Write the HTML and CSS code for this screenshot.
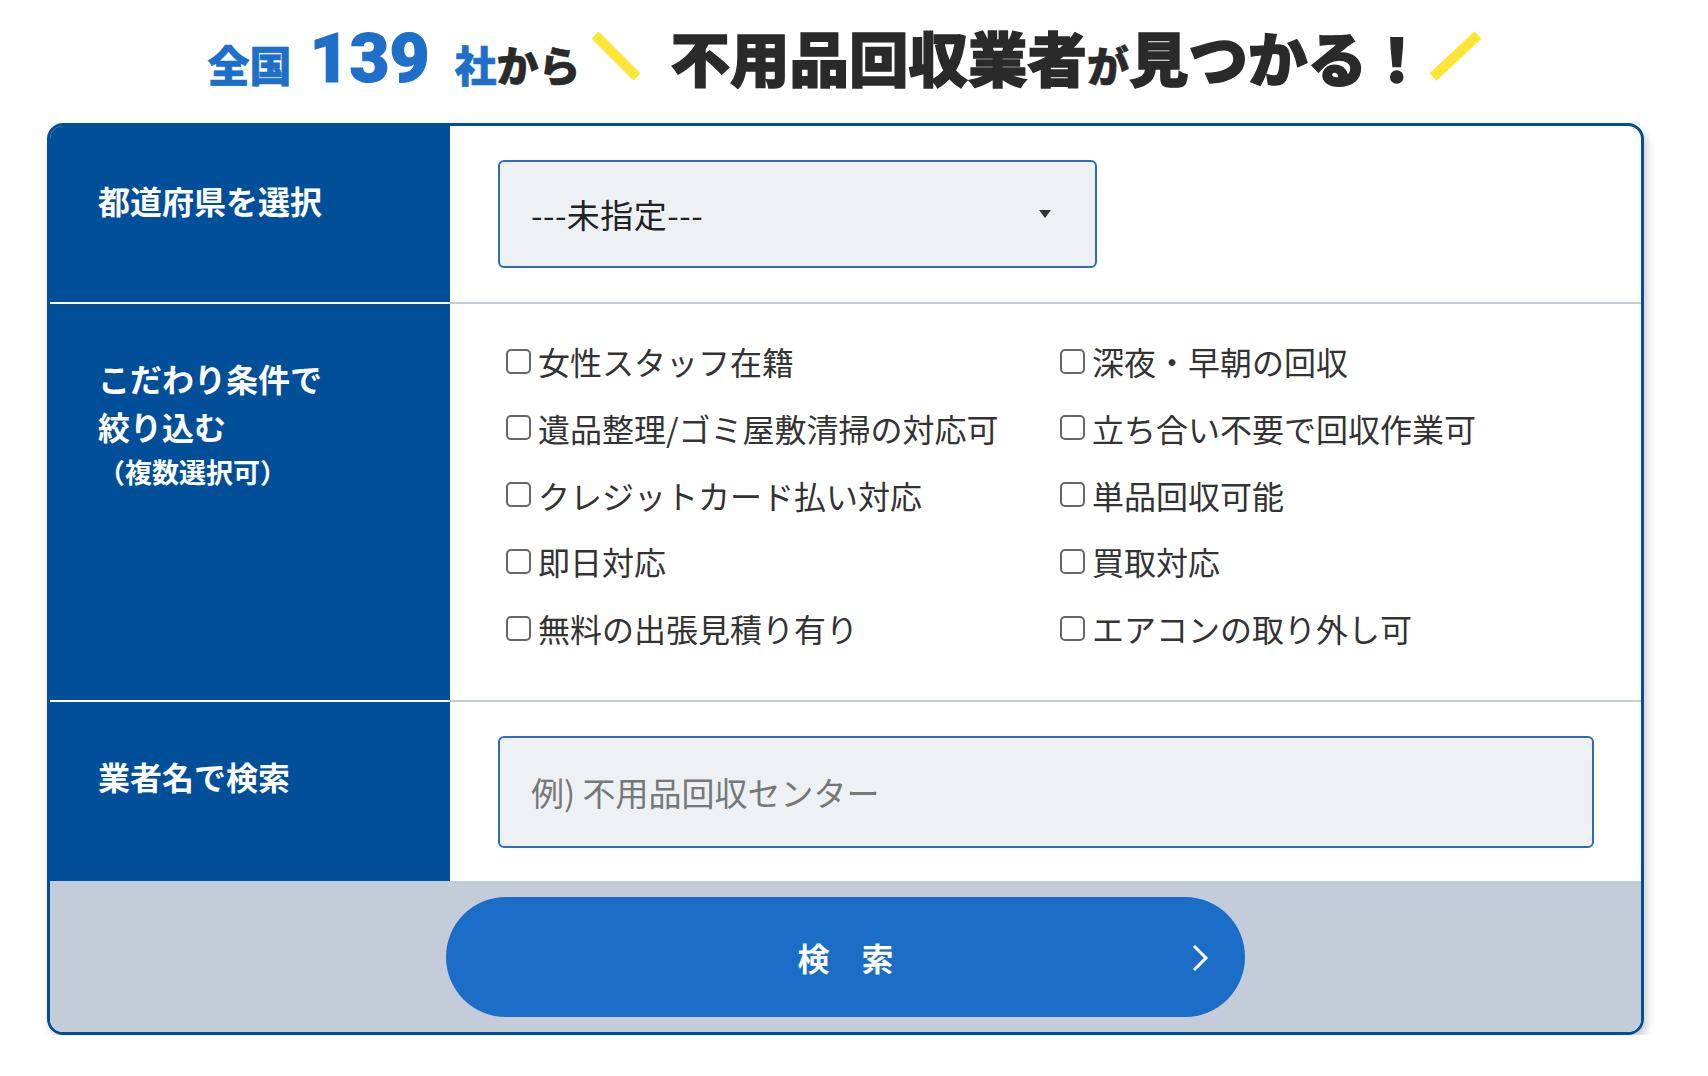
FILE: index.html
```html
<!DOCTYPE html>
<html lang="ja">
<head>
  <meta charset="UTF-8">
  <meta name="viewport" content="width=device-width, initial-scale=1.0">
  <title>不用品回収業者を探す</title>
  <link rel="stylesheet" href="styles.css">
</head>
<body>
  <div class="wrap">
    <h1 class="lead">
      <span class="lead-sm blue">全国</span>
      <span class="lead-num">139</span>
      <span class="lead-sm blue">社</span>
      <span class="lead-sm">から</span>
      <svg class="slash slash-left" width="54" height="52" viewBox="0 0 54 52">
        <line x1="6" y1="5" x2="48" y2="47" stroke="#fde536" stroke-width="10" />
      </svg>
      <span class="lead-lg">不用品回収業者</span>
      <span class="lead-sm">が</span>
      <span class="lead-lg">見つかる！</span>
      <svg class="slash" width="57" height="52" viewBox="0 0 57 52">
        <line x1="6" y1="47" x2="51" y2="5" stroke="#fde536" stroke-width="10" />
      </svg>
    </h1>

    <form class="search" onsubmit="return false;">
      <div class="row">
        <div class="row-label">都道府県を選択</div>
        <div class="row-body">
          <div class="select-box">
            <select class="select">
              <option>---未指定---</option>
              <option>北海道</option>
              <option>東京都</option>
              <option>大阪府</option>
            </select>
            <span class="select-arrow"></span>
          </div>
        </div>
      </div>

      <div class="row">
        <div class="row-label">
          こだわり条件で<br>絞り込む
          <span class="row-note">（複数選択可）</span>
        </div>
        <div class="row-body">
          <div class="checks">
            <label class="check"><input type="checkbox"><span>女性スタッフ在籍</span></label>
            <label class="check"><input type="checkbox"><span>深夜・早朝の回収</span></label>
            <label class="check"><input type="checkbox"><span>遺品整理/ゴミ屋敷清掃の対応可</span></label>
            <label class="check"><input type="checkbox"><span>立ち合い不要で回収作業可</span></label>
            <label class="check"><input type="checkbox"><span>クレジットカード払い対応</span></label>
            <label class="check"><input type="checkbox"><span>単品回収可能</span></label>
            <label class="check"><input type="checkbox"><span>即日対応</span></label>
            <label class="check"><input type="checkbox"><span>買取対応</span></label>
            <label class="check"><input type="checkbox"><span>無料の出張見積り有り</span></label>
            <label class="check"><input type="checkbox"><span>エアコンの取り外し可</span></label>
          </div>
        </div>
      </div>

      <div class="row">
        <div class="row-label">業者名で検索</div>
        <div class="row-body">
          <input type="text" class="text-input" placeholder="例) 不用品回収センター">
        </div>
      </div>

      <div class="search-foot">
        <button type="submit" class="search-btn">
          検　索
          <svg class="search-btn-arrow" width="18" height="28" viewBox="0 0 18 28">
            <polyline points="3,2 15,14 3,26" fill="none" stroke="#fff" stroke-width="3" />
          </svg>
        </button>
      </div>
    </form>
  </div>
</body>
</html>
```

FILE: styles.css
```css
html, body {
  margin: 0;
  padding: 0;
  background-color: #fff;
  color: #333;
  font-family: "Noto Sans CJK JP", "Noto Sans", sans-serif;
}

.wrap {
  width: 1691px;
  padding-top: 16px;
}

/* heading */
.lead {
  display: flex;
  justify-content: center;
  align-items: baseline;
  height: 81px;
  line-height: 81px;
  margin: 0 0 26px;
  color: #2a2a2a;
  font-weight: 900;
  white-space: nowrap;
}

.lead-sm {
  font-size: 42px;
  -webkit-text-stroke: 0.6px currentColor;
}

.blue {
  color: #1e6fc8;
}

.lead-num {
  font-family: Roboto, "Noto Sans", sans-serif;
  font-size: 69px;
  font-weight: 900;
  color: #1e6fc8;
  margin: 0 25px 0 18px;
  -webkit-text-stroke: 1.2px currentColor;
}

.lead-lg {
  font-size: 59.5px;
  -webkit-text-stroke: 1.4px currentColor;
}

.slash {
  margin-bottom: -6px;
}

.slash-left {
  margin: 0 28px -6px 8px;
}

/* card */
.search {
  width: 1597px;
  margin: 0 auto;
  box-sizing: border-box;
  border: 3px solid #004f98;
  border-radius: 16px;
  overflow: hidden;
  box-shadow: 3px 5px 8px rgba(0, 0, 0, 0.2);
}

.row {
  display: grid;
  grid-template-columns: 400px 1fr;
}

.row-label {
  background-color: #004f98;
  color: #fff;
  font-size: 32px;
  font-weight: 700;
  line-height: 48px;
  padding: 50px 0 0 48px;
  border-bottom: 2px solid #fff;
}

.row-note {
  display: block;
  font-size: 27px;
  line-height: 44px;
}

.row-body {
  padding: 34px 47px 34px 48px;
  border-bottom: 2px solid #c5ccd4;
}

.row:nth-child(2) .row-body {
  padding: 33px 47px 48px 48px;
}

.row:nth-child(3) .row-label,
.row:nth-child(3) .row-body {
  border-bottom: none;
}

.row:nth-child(3) .row-body {
  padding-bottom: 33px;
}

/* select */
.select-box {
  position: relative;
  width: 599px;
}

.select {
  appearance: none;
  -webkit-appearance: none;
  display: block;
  width: 100%;
  height: 108px;
  box-sizing: border-box;
  padding: 0 60px 0 31px;
  background-color: #edf1f6;
  border: 2px solid #2f6db3;
  border-radius: 6px;
  color: #222;
  font-family: inherit;
  font-size: 33px;
  letter-spacing: 0.5px;
}

.select-arrow {
  position: absolute;
  right: 46px;
  top: 50px;
  width: 0;
  height: 0;
  border-left: 6px solid transparent;
  border-right: 6px solid transparent;
  border-top: 8px solid #333;
}

/* checkboxes */
.checks {
  display: grid;
  grid-template-columns: 554px 1fr;
  row-gap: 18.75px;
}

.check {
  display: flex;
  align-items: center;
  gap: 7px;
  height: 48px;
  font-size: 32px;
  color: #333;
  white-space: nowrap;
}

.check input {
  appearance: none;
  -webkit-appearance: none;
  width: 25px;
  height: 25px;
  margin: 0 0 0 8px;
  box-sizing: border-box;
  border: 2px solid #666;
  border-radius: 5px;
  background-color: #fff;
  flex-shrink: 0;
}

.check input:checked {
  background-color: #1b6dc8;
  border-color: #1b6dc8;
}

/* text input */
.text-input {
  display: block;
  width: 100%;
  height: 112px;
  box-sizing: border-box;
  padding: 0 31px;
  background-color: #edf1f6;
  border: 2px solid #2f6db3;
  border-radius: 6px;
  font-family: inherit;
  font-size: 33px;
  color: #222;
}

.text-input::placeholder {
  color: #777;
}

/* footer */
.search-foot {
  background-color: #c3ccd8;
  padding: 16px 0 15px;
}

.search-btn {
  position: relative;
  display: block;
  width: 799px;
  height: 120px;
  margin: 0 auto;
  border: none;
  border-radius: 60px;
  background-color: #1b6dc8;
  color: #fff;
  font-family: inherit;
  font-size: 32px;
  font-weight: 700;
  cursor: pointer;
}

.search-btn-arrow {
  position: absolute;
  right: 36px;
  top: 47px;
}
```
